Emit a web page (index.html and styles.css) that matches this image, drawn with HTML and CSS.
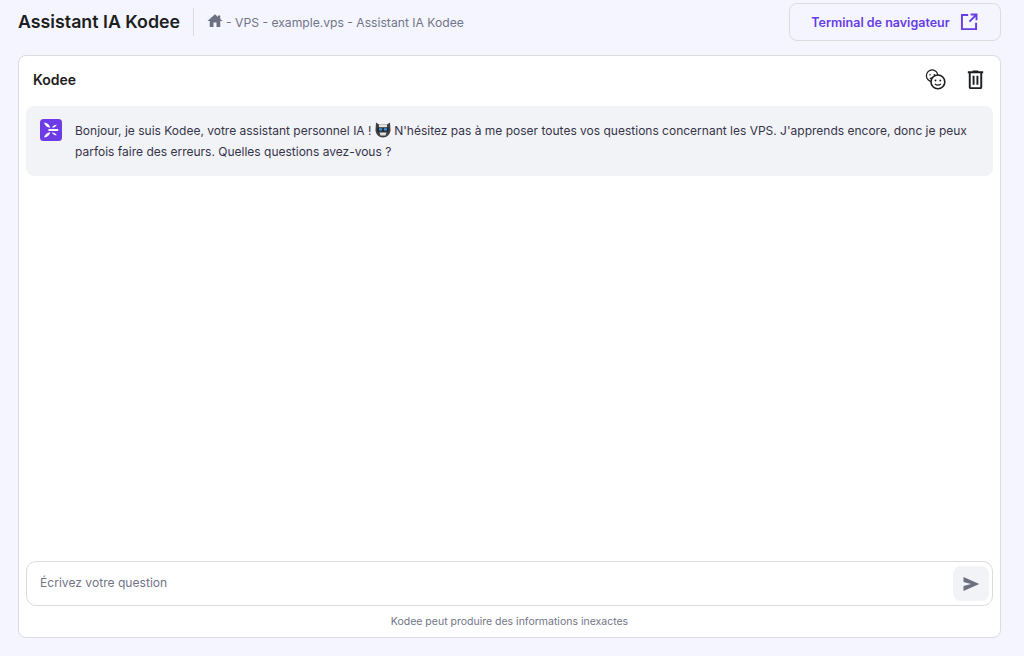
FILE: index.html
```html
<!DOCTYPE html>
<html lang="fr">
<head>
<meta charset="utf-8">
<title>Assistant IA Kodee</title>
<link rel="stylesheet" href="styles.css">
</head>
<body>
<div class="page">
  <header class="topbar">
    <h1 class="title">Assistant IA Kodee</h1>
    <nav class="crumbs">
      <svg class="home" viewBox="0 0 24 24"><path d="M10 20v-6h4v6h5v-8h3l-3-2.700V4.500h-3v2.100L12 3 2 12h3v8z"/></svg>
      <span>- VPS - example.vps - Assistant IA Kodee</span>
    </nav>
    <a class="terminal">
      <span>Terminal de navigateur</span>
      <svg class="ext" viewBox="0 0 24 24"><path d="M11 3.500H3.500v17h17V13M12.500 11.500 20 4M14 3h7v7" fill="none" stroke="currentColor" stroke-width="2.300"/></svg>
    </a>
  </header>
  <main class="card">
    <div class="card-head">
      <span class="card-title">Kodee</span>
      <div class="actions">
        <svg class="act" viewBox="0 0 24 24" fill="none" stroke="#1d1e20">
          <circle cx="8.500" cy="8" r="6" stroke-width="1.300"/>
          <circle cx="6.300" cy="7" r=".8" fill="#1d1e20" stroke="none"/>
          <circle cx="10.700" cy="7" r=".8" fill="#1d1e20" stroke="none"/>
          <path d="M6 11.300c1.500-1.300 3.500-1.300 5 0" stroke-width="1.100"/>
          <circle cx="14.500" cy="14.500" r="7.200" fill="#fff" stroke-width="1.700"/>
          <circle cx="12" cy="13" r="1" fill="#1d1e20" stroke="none"/>
          <circle cx="17" cy="13" r="1" fill="#1d1e20" stroke="none"/>
          <path d="M11.300 16.600c1.800 1.500 4.600 1.500 6.400 0" stroke-width="1.300"/>
        </svg>
        <svg class="act" viewBox="0 0 24 24"><path fill="#1d1e20" d="M9 2.500v1H4v2h1V20a2 2 0 0 0 2 2h10a2 2 0 0 0 2-2V5.500h1v-2h-5v-1H9zM7 5.500h10V20H7V5.500zM9 8v9.500h2V8H9zm4 0v9.500h2V8h-2z"/></svg>
      </div>
    </div>
    <div class="bubble">
      <svg class="logo" viewBox="0 0 22 22">
        <rect width="22" height="22" rx="3.500" fill="#6d3ce6"/>
        <path d="M4 3.500c3.200.3 5.600 2.200 6.300 5.300-3.200-.2-5.500-2.200-6.300-5.300zM4 18.500c.8-3.100 3.100-5.100 6.300-5.300-.7 3.100-3.100 5-6.300 5.300zM12 8.600c.8-1.800 2.500-2.900 4.800-2.900-.9 1.900-2.700 2.900-4.800 2.900zM12 13.400c2.100 0 3.900 1 4.800 2.900-2.300 0-4-1.100-4.800-2.900zM7.800 10h10.400v2H7.800l1.200-1z" fill="#fff"/>
      </svg>
      <p class="msg"><span class="line">Bonjour, je suis Kodee, votre assistant personnel IA ! <svg class="emoji" viewBox="0 0 16 16"><path d="M1 .5 4 2.500h8l3-2 .5 7.500c0 4-3.500 7.500-7.500 7.500S.5 12 .5 8z" fill="#3d4048"/><rect x="4" y="2.500" width="8" height="3" fill="#e8e4da"/><rect x="2.500" y="5.500" width="11" height="4" rx="1" fill="#1e2126"/><rect x="4" y="6.200" width="3.200" height="2.400" fill="#3b8fd8"/><rect x="8.800" y="6.200" width="3.200" height="2.400" fill="#3b8fd8"/><path d="M4.500 10.500h7l-1 3h-5z" fill="#e3dfd6"/></svg> N'hésitez pas à me poser toutes vos questions concernant les VPS. J'apprends encore, donc je peux</span><span class="line">parfois faire des erreurs. Quelles questions avez-vous ?</span></p>
    </div>
    <div class="spacer"></div>
    <div class="composer">
      <span class="placeholder">Écrivez votre question</span>
      <span class="send"><svg viewBox="0 0 24 24"><path d="M3 20.500 22 12 3 3.500v6L12 12 3 14.500z" fill="#6d7081"/></svg></span>
    </div>
    <p class="note">Kodee peut produire des informations inexactes</p>
  </main>
</div>
</body>
</html>
```
FILE: styles.css
```css
* { box-sizing: border-box; }
html, body { margin: 0; height: 100%; }
body {
  background: #f4f5ff;
  font-family: Inter, "Noto Sans", sans-serif;
  color: #1d1e20;
  overflow: hidden;
}
.page {
  height: 656px;
  padding: 3px 23px 18px 18px;
  display: flex;
  flex-direction: column;
}
.topbar {
  display: flex;
  align-items: center;
  height: 38px;
  margin-bottom: 14px;
}
.title {
  margin: 0;
  font-size: 17.800px;
  font-weight: 600;
  line-height: 28px;
  padding-right: 13px;
  border-right: 1px solid #dadce0;
}
.crumbs {
  display: flex;
  align-items: center;
  gap: 2px;
  margin-left: 12px;
  font-size: 12.150px;
  color: #727586;
}
.home { width: 18px; height: 18px; fill: #6d7081; margin-top: -2px; }
.terminal {
  margin-left: auto;
  width: 212px;
  height: 38px;
  border: 1px solid #dadce0;
  border-radius: 8px;
  display: flex;
  align-items: center;
  justify-content: center;
  gap: 9px;
  font-size: 12.500px;
  font-weight: 600;
  color: #673de6;
}
.ext { width: 20px; height: 20px; }
.card {
  flex: 1;
  background: #fff;
  border: 1px solid #dadce0;
  border-radius: 8px;
  padding: 0 7px 8px;
  display: flex;
  flex-direction: column;
}
.card-head {
  height: 50px;
  display: flex;
  align-items: center;
  justify-content: space-between;
  padding: 0 6px 3px 7px;
}
.card-title { font-size: 14px; font-weight: 600; }
.actions { display: flex; gap: 17px; align-items: center; }
.act { width: 23px; height: 23px; display: block; }
.bubble {
  height: 70px;
  background: #f2f3f6;
  border-radius: 8px;
  padding: 13px 14px;
  display: flex;
  gap: 13px;
}
.logo { width: 22px; height: 22px; flex: none; }
.msg {
  margin: 1px 0 0;
  font-size: 12px;
  line-height: 21px;
  color: #36344a;
}
.line { display: block; }
.emoji { width: 16px; height: 16px; vertical-align: -3px; }
.spacer { flex: 1; }
.composer {
  height: 45px;
  margin-bottom: -1px;
  border: 1px solid #dadce0;
  border-radius: 10px;
  display: flex;
  align-items: center;
  justify-content: space-between;
  padding: 0 3px 0 13px;
}
.placeholder { font-size: 12.100px; color: #727586; margin-top: -2px; }
.send {
  width: 36px;
  height: 35px;
  background: #f2f3f6;
  border-radius: 8px;
  display: flex;
  align-items: center;
  justify-content: center;
}
.send svg { width: 20px; height: 20px; }
.note {
  margin: 9px 0 0;
  height: 15px;
  font-size: 10.500px;
  line-height: 15px;
  text-align: center;
  color: #727586;
}
```
